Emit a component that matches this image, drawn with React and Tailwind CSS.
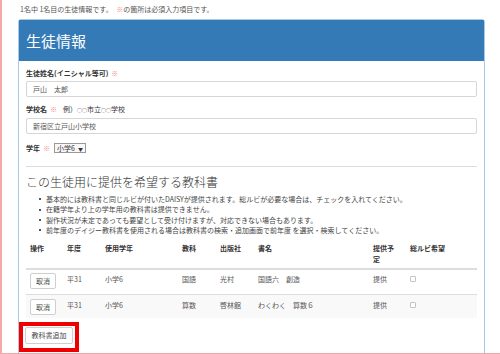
import React from 'react';

const Req = () => <span className="text-[#f08a8a] font-normal ml-[3px]">※</span>;

const Btn = ({ children, className = '' }) => (
  <div className={`flex items-center justify-center bg-white border border-[#cfcfcf] rounded-[2px] text-[7px] text-[#444] ${className}`}>
    {children}
  </div>
);

const Check = () => <div className="w-[6px] h-[6px] border border-[#c4c4c4] rounded-[1px] bg-white mt-[2px]" />;

const cols = 'grid grid-cols-[37px_38px_77px_38px_38px_115px_37px_71px]';

const rows = [
  ['平31', '小学6', '国語', '光村', '国語六　創造', '提供'],
  ['平31', '小学6', '算数', '啓林館', 'わくわく　算数６', '提供'],
];

const notes = [
  '基本的には教科書と同じルビが付いたDAISYが提供されます。総ルビが必要な場合は、チェックを入れてください。',
  '在籍学年より上の学年用の教科書は提供できません。',
  '製作状況が未定であっても要望として受け付けますが、対応できない場合もあります。',
  '前年度のデイジー教科書を使用される場合は教科書の検索・追加画面で前年度 を選択・検索してください。',
];

export default function App() {
  return (
    <div
      className="w-[500px] h-[354px] overflow-hidden bg-white border-l-2 border-b border-[#f3a9a9] text-[#333]"
      style={{ fontFamily: '"Noto Sans CJK JP", "Noto Sans", sans-serif' }}
    >
      {/* top note */}
      <div className="h-[19px] pl-[18px] text-[7px] leading-[18px] text-[#555]">
        1名中 1名目の生徒情報です。　<span className="text-[#f08a8a]">※</span>の箇所は必須入力項目です。
      </div>

      {/* panel */}
      <div className="ml-[16px] w-[467px] h-[400px] border border-[#a9c9e4] rounded-t-[3px]">
        <div className="h-[41px] bg-[#337ab7] flex items-center px-[7px]">
          <span className="text-white text-[15px] leading-none">生徒情報</span>
        </div>

        <div className="px-[7px] pt-[7px]">
          <div className="text-[7px] leading-[10px] font-bold">
            生徒姓名(イニシャル等可)<Req />
          </div>
          <div className="mt-[3px] h-[16px] border border-[#d6d6d6] rounded-[2px] px-[6px] flex items-center text-[7px] text-[#555]">
            戸山　太郎
          </div>

          <div className="mt-[7px] text-[7px] leading-[10px] font-bold">
            学校名<Req />
            <span className="font-normal ml-[6px]">例）<span className="text-[5px]">○○</span>市立<span className="text-[5px]">○○</span>学校</span>
          </div>
          <div className="mt-[3px] h-[16px] border border-[#d6d6d6] rounded-[2px] px-[6px] flex items-center text-[7px] text-[#555]">
            新宿区立戸山小学校
          </div>

          <div className="mt-[8px] h-[12px] flex items-center text-[7px]">
            <span className="font-bold">学年</span>
            <Req />
            <div className="ml-[4px] h-[10px] px-[2px] flex items-center gap-[3px] border border-[#999] bg-[#f8f8f8] text-[7px] leading-none">
              小学6<span className="text-[5px]">▼</span>
            </div>
          </div>

          <div className="mt-[12px] border-t border-[#dcdcdc]" />

          <h2 className="mt-[7px] text-[12px] leading-[16px] font-light text-[#333]">
            この生徒用に提供を希望する教科書
          </h2>

          <ul className="mt-[4px] text-[7px] leading-[10.4px] text-[#444]">
            {notes.map((n) => (
              <li key={n} className="flex items-center pl-[13px]">
                <span className="w-[2px] h-[2px] bg-[#555] mr-[5px] shrink-0" />
                {n}
              </li>
            ))}
          </ul>

          {/* table */}
          <div className="mt-[3px] text-[7px]">
            <div className={`${cols} font-bold leading-[11px] pt-[4px] pb-[3px] border-b-2 border-[#dddddd]`}>
              <div className="px-[4px]">操作</div>
              <div className="px-[4px]">年度</div>
              <div className="px-[4px]">使用学年</div>
              <div className="px-[4px]">教科</div>
              <div className="px-[4px]">出版社</div>
              <div className="px-[4px]">書名</div>
              <div className="px-[4px]">提供予<br />定</div>
              <div className="px-[4px]">総ルビ希望</div>
            </div>
            {rows.map((r, i) => (
              <div
                key={i}
                className={`${cols} h-[24px] leading-[10px] text-[#555] ${i === 1 ? 'bg-[#f9f9f9] border-t border-[#dddddd] pt-[4px]' : 'pt-[3px]'}`}
              >
                <div className="px-[4px]">
                  <Btn className="w-[26px] h-[16px]">取消</Btn>
                </div>
                {r.map((c, j) => (
                  <div key={j} className="px-[4px] pt-[1px]">{c}</div>
                ))}
                <div className="px-[4px] pt-[1px]">
                  <Check />
                </div>
              </div>
            ))}
          </div>

          {/* add button, highlighted */}
          <div className="mt-[4px] -ml-[7px] inline-block border-4 border-[#ee0000] pt-[1px] pb-[4px] px-[2px]">
            <Btn className="w-[48px] h-[17px]">教科書追加</Btn>
          </div>
        </div>
      </div>
    </div>
  );
}
